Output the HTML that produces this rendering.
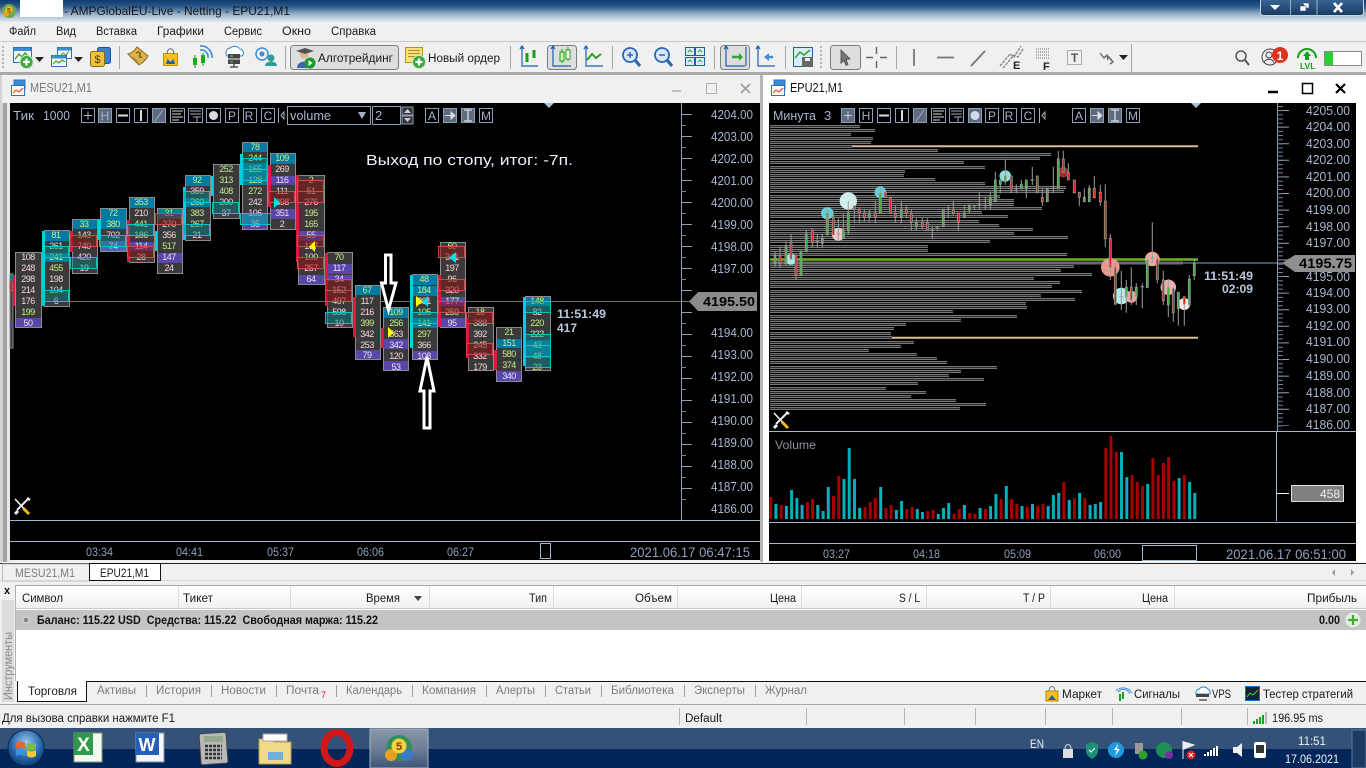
<!DOCTYPE html>
<html lang="ru"><head><meta charset="utf-8"><title>MT5</title>
<style>
html,body{margin:0;padding:0;background:#f0f0f0;overflow:hidden}
svg{display:block;font-family:"Liberation Sans",sans-serif}
.ui{font-size:11.5px;fill:#1a1a1a}
.gr{font-size:11.5px;fill:#7c7c7c}
.ax{font-size:13px;fill:#a7b6cc}
.tm{font-size:12px;fill:#8f9fb8}
.dt{font-size:13.5px;fill:#8ea0bd}
.bt{font-size:12px;fill:#a3b2c8;text-anchor:middle}
.k{fill:#3a3a3a;stroke:#8c8c8c}
.bl{fill:#007ba3}.pu{fill:#5a45a8}
.t{fill:rgba(0,140,140,.42);stroke:#00c4cf}
.r{fill:rgba(140,20,20,.52);stroke:#cc4c4c}
.rb{fill:#e01840}.cb{fill:#00cfe0}
.c text{font-size:9px;letter-spacing:-.5px;text-anchor:middle}
.p{fill:#f7d8d8}.g{fill:#c6f088}.w{fill:#e8e4f8}
.o{fill:none;stroke:#8f9fb5}
.f{fill:#5d6b82;stroke:#8f9fb5}
</style></head><body>
<svg width="1366" height="768" viewBox="0 0 1366 768" xmlns="http://www.w3.org/2000/svg">
<defs>
<linearGradient id="tb" x1="0" y1="0" x2="0" y2="1"><stop offset="0" stop-color="#0e3a6e"/><stop offset=".3" stop-color="#2c5a8c"/><stop offset=".62" stop-color="#93acc6"/><stop offset="1" stop-color="#e2e9f0"/></linearGradient>
<linearGradient id="hd" x1="0" y1="0" x2="0" y2="1"><stop offset="0" stop-color="#fff"/><stop offset="1" stop-color="#eef0f2"/></linearGradient>
<linearGradient id="btn" x1="0" y1="0" x2="0" y2="1"><stop offset="0" stop-color="#3d6a9a"/><stop offset="1" stop-color="#16395f"/></linearGradient>
<linearGradient id="tk" x1="0" y1="0" x2="0" y2="1"><stop offset="0" stop-color="#8a97a8"/><stop offset=".5" stop-color="#6d7f96"/><stop offset="1" stop-color="#3c5577"/></linearGradient>
<radialGradient id="orb" cx=".5" cy=".35" r=".7"><stop offset="0" stop-color="#9cc8ee"/><stop offset=".6" stop-color="#2566a8"/><stop offset="1" stop-color="#0c3467"/></radialGradient>
<g id="pl"><circle r="6.5" fill="#3aa83a" stroke="#c8e8c8"/><path d="M-3.5 0H3.5M0-3.5V3.5" stroke="#fff" stroke-width="2.2"/></g>
<g id="ci"><rect x="3" y="0" width="11" height="9" fill="#3c8ad8" stroke="#2a72c0"/><rect x=".5" y="5.5" width="13" height="10" fill="#fff" stroke="#2a72c0"/><path d="M2 13l3-3 3 2 4-4" fill="none" stroke="#e03020"/></g>
<g id="tools"><path d="M1 1L15 16" stroke="#eee" stroke-width="1.6"/><path d="M15 0L3 12" stroke="#eee" stroke-width="2"/><path d="M13 0l3 2" stroke="#eee" stroke-width="2.5"/><path d="M9 10l6 6" stroke="#f2b820" stroke-width="3"/><path d="M1 16l3-3" stroke="#eee" stroke-width="3"/></g>
<path id="vp" fill="none" shape-rendering="crispEdges" d="M770 126.5H860M770 130.5H875M770 134.5H851M770 138.5H873M770 142.5H871M770 146.5H852M770 150.5H938M770 154.5H1051M770 158.5H1040M770 162.5H964M770 167.5H985M770 171.5H905M770 175.5H904M770 179.5H935M770 183.5H985M770 187.5H1066M770 191.5H1064M770 196.5H1000M770 200.5H1014M770 204.5H1014M770 208.5H1042M770 212.5H982M770 216.5H1008M770 221.5H979M770 225.5H999M770 229.5H1033M770 233.5H1014M770 237.5H1068M770 241.5H990M770 246.5H928M770 250.5H928M770 254.5H1067M770 266.5H1074M770 270.5H1061M770 274.5H1092M770 278.5H1034M770 282.5H1060M770 286.5H1052M770 291.5H1082M770 295.5H1041M770 299.5H1075M770 303.5H1026M770 307.5H1027M770 311.5H953M770 316.5H1017M770 320.5H961M770 324.5H906M770 328.5H894M770 333.5H891M770 337.5H892M770 342.5H914M770 346.5H901M770 350.5H869M770 354.5H917M770 358.5H937M770 362.5H947M770 367.5H997M770 371.5H961M770 375.5H949M770 379.5H984M770 383.5H918M770 388.5H886M770 392.5H926M770 396.5H911M770 400.5H956M770 404.5H986M770 408.5H960"/>
</defs>

<rect width="1366" height="768" fill="#f0f0f0"/>
<!-- title bar -->
<rect width="1366" height="22" fill="url(#tb)"/>
<circle cx="9" cy="11" r="7" fill="#6aa84f"/><circle cx="6" cy="14" r="3" fill="#e8a020"/><circle cx="9" cy="10" r="3.6" fill="#f0c020"/><text x="9" y="13" font-size="7" fill="#8a3a00" text-anchor="middle" font-weight="bold">5</text>
<rect x="20" y="0" width="43" height="17" fill="#fff"/>
<text x="64" y="15" font-size="12" fill="#141414" textLength="226" lengthAdjust="spacingAndGlyphs">- AMPGlobalEU-Live - Netting - EPU21,M1</text>
<rect x="1260.5" y="-2" width="103" height="17.5" rx="3" fill="url(#btn)" stroke="#c8d6e4"/>
<path d="M1290.5 0V15M1317 0V15" stroke="#c8d6e4" opacity=".7"/>
<path d="M1270 5h10l-5 5z" fill="#fff"/>
<path d="M1300 6h6v5h-6z M1303 3h6v5h-3" fill="#fff" stroke="#27486c" stroke-width=".6"/>
<path d="M1334 3l8 9M1342 3l-8 9" stroke="#fff" stroke-width="2.6"/>

<!-- menu -->
<text class="ui" x="9" y="35" textLength="27" lengthAdjust="spacingAndGlyphs">Файл</text>
<text class="ui" x="56" y="35" textLength="20" lengthAdjust="spacingAndGlyphs">Вид</text>
<text class="ui" x="96" y="35" textLength="41" lengthAdjust="spacingAndGlyphs">Вставка</text>
<text class="ui" x="157" y="35" textLength="47" lengthAdjust="spacingAndGlyphs">Графики</text>
<text class="ui" x="224" y="35" textLength="38" lengthAdjust="spacingAndGlyphs">Сервис</text>
<text class="ui" x="282" y="35" textLength="29" lengthAdjust="spacingAndGlyphs">Окно</text>
<text class="ui" x="331" y="35" textLength="45" lengthAdjust="spacingAndGlyphs">Справка</text>
<path d="M0 41.5H1366" stroke="#c9c9c9"/>

<!-- toolbar -->
<path d="M3 46V70M821 46V70" stroke="#b4b4b4" stroke-width="2" stroke-dasharray="2 2"/>
<path d="M119.5 46V69M285.5 46V69M510.5 46V69M612.5 46V69M714.5 46V69M785.5 46V69M896.5 46V69M1131.5 44V72" stroke="#a8a8a8"/>
<!-- new chart -->
<rect x="13.5" y="47.5" width="18" height="15" fill="#f4f8fc" stroke="#2a72c0"/><rect x="14" y="48" width="17" height="3" fill="#3c8ad8"/><path d="M15 59l4-5 3 3 3-4 4 4" fill="none" stroke="#3aa028" stroke-width="1.4"/><use href="#pl" x="26.5" y="62"/>
<path d="M35 57h9l-4.5 5z" fill="#222"/>
<!-- profiles -->
<rect x="57.5" y="47.5" width="14" height="11" fill="#f4f8fc" stroke="#2a72c0"/><path d="M58 49h13" stroke="#3c8ad8" stroke-width="3"/><path d="M60 56l3-3 3 2 3-4" fill="none" stroke="#3aa028"/>
<rect x="51.5" y="55.5" width="15" height="11" fill="#f4f8fc" stroke="#2a72c0"/><path d="M52 57h14" stroke="#3c8ad8" stroke-width="3"/><path d="M53 64l3-3 3 2 3-3 3 2" fill="none" stroke="#3aa028" stroke-width="1.2"/>
<path d="M74 57h9l-4.5 5z" fill="#222"/>
<!-- market watch -->
<rect x="97.5" y="47.5" width="13" height="16" rx="2" fill="#3f7fd0" stroke="#234f8c"/><rect x="90.5" y="51.5" width="14" height="15" rx="2" fill="#f0c040" stroke="#8a6a10"/><text x="97.5" y="63" font-size="11" fill="#5a4208" text-anchor="middle">$</text>
<!-- book -->
<path d="M128 54c4-1 7-4 9-7l11 9c-2 4-6 7-9 9z" fill="#dcb44c" stroke="#8a6a20"/><path d="M130 57c4 0 7 3 9 8" fill="none" stroke="#a88426"/><path d="M136 53c3-2 5 0 4 2s0 3 2 2" fill="none" stroke="#8a5a10" stroke-width="1.5"/>
<!-- bag -->
<rect x="163.5" y="53.5" width="14" height="12" fill="#f4c020" stroke="#c09010"/><path d="M167 54c0-7 7-7 7 0" fill="none" stroke="#666"/><path d="M166 64l1.5-5 3 3 3-3 1.5 5z" fill="#2060b0"/>
<!-- signals -->
<path d="M195 55V68M203 53V66" stroke="#0a9a0a"/><rect x="193" y="58" width="4" height="7" fill="#10b010"/><rect x="201" y="55" width="4" height="8" fill="#10b010"/><path d="M200 50a7 7 0 0 1 8 8M200 46a11 11 0 0 1 12 12" fill="none" stroke="#3b8ed8" stroke-width="1.6"/>
<!-- vps -->
<path d="M227 56a5 5 0 0 1 3-8 7 7 0 0 1 10 1 4 4 0 0 1 2 7z" fill="#fff" stroke="#2a8ad0"/><rect x="228" y="54" width="12" height="4.5" fill="#444"/><rect x="228" y="59.5" width="12" height="4.5" fill="#444"/><path d="M230 56h3M230 62h3" stroke="#6c6"/><path d="M234 64v3M230 67h8" stroke="#555" stroke-width="1.5"/>
<!-- social -->
<circle cx="262" cy="54" r="6" fill="none" stroke="#3b8ed8" stroke-width="1.5"/><circle cx="262" cy="54" r="2.5" fill="#3b8ed8"/><circle cx="271" cy="58" r="3.5" fill="#2f9d98"/><path d="M265 66c0-6 12-6 12 0z" fill="#2f9d98"/>

<rect x="290.5" y="45.5" width="108" height="24" rx="3" fill="#dedede" stroke="#7e7e7e"/>
<circle cx="304" cy="54" r="4.5" fill="#e0b890"/><path d="M296 51l9-3 9 3-9 3z" fill="#555"/><path d="M297 68c0-8 13-8 14-3v3z" fill="#3a66b0"/><circle cx="310" cy="63" r="5.5" fill="#1a9a30"/><path d="M308.5 60l4 3-4 3z" fill="#fff"/>
<text class="ui" x="318" y="62" textLength="75" lengthAdjust="spacingAndGlyphs">Алготрейдинг</text>
<rect x="405.5" y="47.5" width="17" height="15" fill="#f6e080" stroke="#b89020"/><path d="M408 50.5H420M408 53.5H420M408 56.5H420" stroke="#b08a20"/><use href="#pl" x="419" y="62"/>
<text class="ui" x="428" y="62" textLength="72" lengthAdjust="spacingAndGlyphs">Новый ордер</text>

<!-- chart type buttons -->
<rect x="547.5" y="45.5" width="29" height="24" rx="3" fill="#dedede" stroke="#7e7e7e"/>
<rect x="720.5" y="45.5" width="29" height="24" rx="3" fill="#dedede" stroke="#7e7e7e"/>
<g fill="none" stroke="#1c5fb0" stroke-width="1.2">
<path d="M522 47V66H538M520 49l2-3 2 3"/>
<path d="M553 47V66H571M551 49l2-3 2 3"/>
<path d="M586 47V66H603M584 49l2-3 2 3"/>
<path d="M726 47V66H745M724 49l2-3 2 3M746 47V66"/>
<path d="M758 47V66H775M756 49l2-3 2 3"/>
</g>
<path d="M527 53V62M534 50V58" stroke="#18a018" stroke-width="3"/>
<path d="M562 49V63M568 47V61" stroke="#18a018"/><rect x="560" y="52" width="4" height="9" fill="#d8f0b0" stroke="#18a018"/><rect x="566" y="50" width="4" height="9" fill="#fff" stroke="#18a018"/>
<path d="M587 60l5-6 4 4 5-4" fill="none" stroke="#18a018" stroke-width="1.8"/>
<circle cx="630" cy="55" r="7" fill="#d8e8f8" stroke="#2a66b0" stroke-width="1.8"/><path d="M627 55h6M630 52v6" stroke="#2a66b0" stroke-width="1.5"/><path d="M635 60l5 6" stroke="#2a66b0" stroke-width="3"/>
<circle cx="662" cy="55" r="7" fill="#d8e8f8" stroke="#2a66b0" stroke-width="1.8"/><path d="M659 55h6" stroke="#2a66b0" stroke-width="1.5"/><path d="M667 60l5 6" stroke="#2a66b0" stroke-width="3"/>
<g fill="#d8ecf8" stroke="#1c5fb0"><rect x="685.5" y="47.5" width="9" height="8"/><rect x="695.5" y="47.5" width="9" height="8"/><rect x="685.5" y="57.5" width="9" height="8"/><rect x="695.5" y="57.5" width="9" height="8"/></g>
<path d="M688 52l2-2 2 2M698 52l2-2 2 2M688 62l2-2 2 2M698 62l2-2 2 2" stroke="#2fa82f" fill="none"/>
<path d="M732 57h8" stroke="#2fa82f" stroke-width="2.5"/><path d="M739 53l4 4-4 4z" fill="#2fa82f"/>
<path d="M773 57h-5" stroke="#3b8ed8" stroke-width="2.5"/><path d="M769 53l-5 4 5 4z" fill="#3b8ed8"/>
<rect x="793.5" y="47.5" width="19" height="19" fill="#d8ecf8" stroke="#1c5fb0"/><rect x="802" y="57" width="11" height="10" fill="#666"/><rect x="805" y="58" width="5" height="3" fill="#eee"/><path d="M795 58l5-6 4 3 6-5" fill="none" stroke="#2fa82f" stroke-width="1.5"/>

<rect x="830.5" y="45.5" width="30" height="24" rx="3" fill="#dedede" stroke="#7e7e7e"/>
<path d="M841 50l9 9-4 .5 2 5-2 .8-2-5-3 3z" fill="#777" stroke="#444" stroke-width=".8"/>
<path d="M876.5 47V54M876.5 61V68M866 57.5H873M880 57.5H887" stroke="#666" stroke-width="1.5"/>
<path d="M914 49V66M937 57.5H954M971 66L985 51" stroke="#777" stroke-width="1.8"/>
<path d="M1000 66l10-12 4 3 7-11M1003 68l11-13 4 2 5-8" stroke="#888" stroke-width="1.4" fill="none" stroke-dasharray="3 1"/>
<text x="1013" y="69" font-size="11" font-weight="bold" fill="#222">E</text>
<path d="M1036 49H1050M1036 52H1050M1036 55H1050M1036 58H1050" stroke="#666" stroke-dasharray="1 1"/>
<text x="1043" y="70" font-size="11" font-weight="bold" fill="#222">F</text>
<rect x="1067.5" y="50.5" width="14" height="14" fill="none" stroke="#666" stroke-dasharray="1 1"/>
<text x="1074.5" y="62" font-size="12" font-weight="bold" fill="#555" text-anchor="middle">T</text>
<path d="M1100 53l4 5 3-3 1 5M1108 56l5 6-3 2" fill="none" stroke="#666" stroke-width="1.4"/>
<path d="M1119 55h9l-4.5 5z" fill="#222"/>
<circle cx="1241" cy="56" r="5" fill="none" stroke="#555" stroke-width="1.5"/><path d="M1245 60l4 5" stroke="#555" stroke-width="2"/>
<circle cx="1270" cy="57" r="8" fill="#eee" stroke="#444"/><circle cx="1269" cy="55" r="3" fill="none" stroke="#444"/><path d="M1264 63c1-5 9-5 10 0" fill="none" stroke="#444"/><circle cx="1280" cy="55" r="8" fill="#e03020"/><text x="1280" y="60" font-size="12" font-weight="bold" fill="#fff" text-anchor="middle">1</text>
<path d="M1298 58a9 9 0 0 1 18 0" fill="none" stroke="#18a018" stroke-width="2"/><path d="M1307 51l4 5h-2v4h-4v-4h-2z" fill="#18a018"/><text x="1300" y="69" font-size="8.5" font-weight="bold" fill="#18a018">LVL</text>
<rect x="1324.5" y="51.5" width="37" height="14" fill="#fff" stroke="#888"/><rect x="1325" y="52" width="8" height="13" fill="#2fce2f"/>
<rect x="0" y="72" width="1366" height="3" fill="#a9a9a9"/>

<!-- windows -->
<rect x="0" y="75" width="3" height="487" fill="#d4d4d4"/><rect x="3" y="75" width="4" height="487" fill="#a4a4a4"/><rect x="7" y="75" width="3" height="487" fill="#e8e8e8"/>
<rect x="2" y="75" width="760" height="28" fill="#f0f0f0"/>
<rect x="760" y="75" width="3" height="487" fill="#b6b6b6"/>
<rect x="763" y="75" width="603" height="487" fill="#fff"/>
<use href="#ci" x="11" y="80"/><use href="#ci" x="771" y="80"/>
<text x="30" y="92" font-size="12.5" fill="#7a7a7a" textLength="62" lengthAdjust="spacingAndGlyphs">MESU21,M1</text>
<text x="790" y="92" font-size="12.5" fill="#111" textLength="53" lengthAdjust="spacingAndGlyphs">EPU21,M1</text>
<path d="M672 91H681" stroke="#b0b0b0" stroke-width="1.5"/><rect x="706.5" y="83.5" width="10" height="10" fill="none" stroke="#b0b0b0"/><path d="M741 84l9 9M750 84l-9 9" stroke="#a0a0a0" stroke-width="1.8"/>
<path d="M1268 92H1278" stroke="#000" stroke-width="2.5"/><rect x="1302.5" y="83.5" width="10" height="10" fill="none" stroke="#000" stroke-width="1.5"/><path d="M1336 84l9 9M1345 84l-9 9" stroke="#000" stroke-width="2.2"/>
<rect x="10" y="103" width="750" height="457" fill="#000"/>
<rect x="769" y="103" width="587" height="458" fill="#000"/>

<!-- LEFT chart -->
<path d="M70 301.5H690" stroke="#707070"/>
<text class="ax" x="13" y="120" textLength="21" lengthAdjust="spacingAndGlyphs" fill="#96a3b5">Тик</text>
<text class="ax" x="43" y="120" textLength="27" lengthAdjust="spacingAndGlyphs" fill="#96a3b5">1000</text>
<g>
<rect class="o" x="81.5" y="108.5" width="13" height="14"/><path d="M84 115.5H92M88 111.5V119.5" stroke="#a3b2c8"/>
<rect class="f" x="98.5" y="108.5" width="13" height="14"/><text class="bt" x="105" y="120">H</text>
<rect class="o" x="116.5" y="108.5" width="13" height="14"/><path d="M118 115.5H128" stroke="#ddd" stroke-width="2"/>
<rect class="o" x="134.5" y="108.5" width="13" height="14"/><path d="M141 110V121" stroke="#ddd" stroke-width="2"/>
<rect class="f" x="152.5" y="108.5" width="13" height="14"/><path d="M155 121L163 110" stroke="#aab"/>
<rect class="o" x="170.5" y="108.5" width="14" height="14"/><path d="M172 111H183M172 114H181M172 117H183M172 120H179" stroke="#ddd"/>
<rect class="o" x="188.5" y="108.5" width="14" height="14"/><path d="M190 111H201M190 114H201M193 117H201M197 117V122" stroke="#aab"/>
<rect class="o" x="206.5" y="108.5" width="14" height="14"/><circle cx="213.5" cy="115.5" r="4.5" fill="#d5dbe6"/>
<rect class="o" x="225.5" y="108.5" width="13" height="14"/><text class="bt" x="232" y="120">P</text>
<rect class="o" x="243.5" y="108.5" width="13" height="14"/><text class="bt" x="249" y="120">R</text>
<rect class="o" x="261.5" y="108.5" width="13" height="14"/><text class="bt" x="268" y="120">C</text>
<path d="M278.5 108V123M284 112l-3 3.5 3 3.5z" stroke="#a3b2c8" fill="none"/>
<rect class="o" x="287.5" y="106.5" width="83" height="18"/><text class="ax" x="290" y="120" textLength="41" lengthAdjust="spacingAndGlyphs">volume</text><path d="M358 112h8l-4 7z" fill="#a3b2c8"/>
<rect class="o" x="372.5" y="106.5" width="28" height="18"/><text class="ax" x="375" y="120">2</text>
<rect x="402" y="107" width="11" height="8" fill="#333" stroke="#8f9fb5"/><rect x="402" y="116" width="11" height="8" fill="#333" stroke="#8f9fb5"/><path d="M404 113l3.5-4 3.5 4zM404 118l3.5 4 3.5-4z" fill="#ccd"/>
<rect class="o" x="425.5" y="108.5" width="13" height="14"/><text class="bt" x="432" y="120">A</text>
<rect class="f" x="443.5" y="108.5" width="13" height="14"/><path d="M445 115.5H453M451 112l4 3.5-4 3.5z" fill="#ddd" stroke="#ddd"/>
<rect class="f" x="461.5" y="108.5" width="13" height="14"/><path d="M464 110H472M464 121H472M468 110V121" stroke="#ddd" stroke-width="1.3"/>
<rect class="o" x="479.5" y="108.5" width="13" height="14"/><text class="bt" x="486" y="120">M</text>
<path d="M544 103H554L549 108z" fill="#a9bfd8"/>
</g>
<text x="366" y="165" font-size="15" fill="#eef" textLength="207" lengthAdjust="spacingAndGlyphs">Выход по стопу, итог: -7п.</text>

<!-- footprint -->
<g class="c">
<rect class="k" x="10" y="274" width="3" height="74"/><rect class="bl" x="10" y="275" width="3" height="9"/><rect class="pu" x="10" y="322" width="3" height="6"/><rect class="r" x="10" y="279.5" width="2" height="11"/>
<!-- 1 --><rect class="rb" x="13" y="275" width="3" height="31"/><rect class="k" x="15.5" y="252.5" width="26" height="75"/><rect class="pu" x="16" y="318" width="25" height="9"/>
<text class="p" x="28" y="260">108</text><text class="p" x="28" y="271">248</text><text class="p" x="28" y="282">298</text><text class="p" x="28" y="293">214</text><text class="p" x="28" y="304">176</text><text class="g" x="28" y="315">199</text><text class="w" x="28" y="326">50</text>
<!-- 2 --><rect class="k" x="44.5" y="230.5" width="25" height="76"/><rect class="bl" x="45" y="231" width="24" height="10"/><rect class="bl" x="45" y="253" width="24" height="9"/><rect class="cb" x="42" y="231" width="3" height="75"/>
<text class="g" x="56" y="238">81</text><text class="g" x="56" y="249">261</text><text class="g" x="56" y="260">241</text><text class="g" x="56" y="271">455</text><text class="p" x="56" y="282">198</text><text class="g" x="56" y="293">104</text><text class="p" x="56" y="304">6</text>
<rect class="t" x="44.5" y="246.5" width="24" height="11"/><rect class="t" x="44.5" y="290.5" width="24" height="11"/>
<!-- 3 --><rect class="k" x="72.5" y="219.5" width="25" height="54"/><rect class="bl" x="73" y="220" width="24" height="9"/><rect class="rb" x="70" y="231" width="3" height="21"/>
<text class="g" x="84" y="227">33</text><text class="p" x="84" y="238">143</text><text class="p" x="84" y="249">740</text><text class="p" x="84" y="260">420</text><text class="p" x="84" y="271">19</text>
<rect class="r" x="70.5" y="235.5" width="26" height="11"/><rect class="t" x="70.5" y="257.5" width="26" height="11"/>
<!-- 4 --><rect class="k" x="100.5" y="208.5" width="26" height="43"/><rect class="bl" x="101" y="209" width="25" height="10"/><rect class="bl" x="101" y="219" width="25" height="10"/><rect x="101" y="241" width="25" height="10" fill="#4868b8"/><rect class="cb" x="98" y="219" width="3" height="21"/>
<text class="g" x="113" y="216">72</text><text class="g" x="113" y="227">380</text><text class="p" x="113" y="238">702</text><text class="p" x="113" y="249">74</text>
<rect class="t" x="99.5" y="235.5" width="26" height="11"/>
<!-- 5 --><rect class="k" x="129.5" y="197.5" width="25" height="65"/><rect class="bl" x="130" y="198" width="24" height="10"/><rect class="pu" x="130" y="242" width="24" height="9"/><rect class="rb" x="127" y="220" width="3" height="42"/><rect class="cb" x="155" y="231" width="2" height="20"/>
<text class="g" x="141" y="205">353</text><text class="p" x="141" y="216">210</text><text class="g" x="141" y="227">441</text><text class="g" x="141" y="238">186</text><text class="p" x="141" y="249">114</text><text class="p" x="141" y="260">28</text>
<rect class="t" x="127.5" y="224.5" width="26" height="11"/><rect class="r" x="127.5" y="246.5" width="26" height="11"/>
<!-- 6 --><rect class="k" x="157.5" y="208.5" width="25" height="65"/><rect class="bl" x="158" y="209" width="24" height="10"/><rect class="pu" x="158" y="253" width="24" height="10"/>
<text class="g" x="169" y="216">31</text><text class="p" x="169" y="227">270</text><text class="p" x="169" y="238">356</text><text class="g" x="169" y="249">517</text><text class="w" x="169" y="260">147</text><text class="p" x="169" y="271">24</text>
<rect class="r" x="155.5" y="213.5" width="26" height="11"/>
<!-- 7 --><rect class="k" x="185.5" y="175.5" width="25" height="65"/><rect class="bl" x="186" y="176" width="24" height="10"/><rect class="bl" x="186" y="198" width="24" height="9"/><rect class="cb" x="183" y="187" width="3" height="53"/><rect class="cb" x="211" y="176" width="2" height="20"/>
<text class="g" x="197" y="183">92</text><text class="p" x="197" y="194">359</text><text class="g" x="197" y="205">260</text><text class="g" x="197" y="216">383</text><text class="g" x="197" y="227">267</text><text class="p" x="197" y="238">21</text>
<rect class="t" x="183.5" y="191.5" width="26" height="11"/><rect class="t" x="183.5" y="224.5" width="26" height="11"/>
<!-- 8 --><rect class="k" x="213.5" y="164.5" width="26" height="54"/>
<text class="g" x="226" y="172">252</text><text class="g" x="226" y="183">313</text><text class="g" x="226" y="194">408</text><text class="p" x="226" y="205">200</text><text class="p" x="226" y="216">37</text>
<rect class="t" x="212.5" y="202.5" width="26" height="11"/>
<!-- 9 --><rect class="k" x="242.5" y="142.5" width="25" height="87"/><rect class="bl" x="243" y="143" width="24" height="9"/><rect class="bl" x="243" y="163" width="24" height="22"/><rect x="243" y="213" width="24" height="11" fill="#3c78b8"/><rect class="pu" x="243" y="224" width="24" height="5"/><rect class="cb" x="240" y="154" width="3" height="31"/>
<text class="g" x="255" y="150">78</text><text class="g" x="255" y="161">244</text><text class="g" x="255" y="172">155</text><text class="g" x="255" y="183">128</text><text class="g" x="255" y="194">272</text><text class="p" x="255" y="205">242</text><text class="p" x="255" y="216">106</text><text class="p" x="255" y="227">35</text>
<rect class="t" x="243" y="158.5" width="24" height="11"/><rect class="t" x="243" y="169.5" width="24" height="11"/><rect class="t" x="240.5" y="213.5" width="54" height="11"/>
<!-- 10 --><rect class="k" x="270.5" y="153.5" width="25" height="76"/><rect class="bl" x="271" y="154" width="24" height="10"/><rect class="pu" x="271" y="176" width="24" height="9"/><rect class="pu" x="271" y="209" width="24" height="10"/><rect class="rb" x="268" y="165" width="3" height="42"/>
<text class="g" x="282" y="161">109</text><text class="p" x="282" y="172">269</text><text class="w" x="282" y="183">116</text><text class="p" x="282" y="194">111</text><text class="p" x="282" y="205">398</text><text class="p" x="282" y="216">351</text><text class="p" x="282" y="227">2</text>
<rect class="r" x="268.5" y="191.5" width="26" height="11"/><path d="M274 197l6 5.5-6 5.5z" fill="#00e0e8"/>
<!-- 11 --><rect class="k" x="298.5" y="175.5" width="26" height="109"/><rect class="pu" x="299" y="231" width="25" height="10"/><rect class="pu" x="299" y="275" width="25" height="9"/><rect class="rb" x="296" y="175" width="3" height="87"/>
<text class="g" x="311" y="183">2</text><text class="p" x="311" y="194">51</text><text class="p" x="311" y="205">276</text><text class="g" x="311" y="216">195</text><text class="g" x="311" y="227">165</text><text class="p" x="311" y="238">55</text><text class="p" x="311" y="249">137</text><text class="p" x="311" y="260">100</text><text class="p" x="311" y="271">257</text><text class="w" x="311" y="282">64</text>
<rect class="r" x="297.5" y="180.5" width="26" height="11"/><rect class="r" x="297.5" y="191.5" width="26" height="11"/><rect class="r" x="297.5" y="235.5" width="26" height="11"/><rect class="r" x="297.5" y="257.5" width="26" height="11"/><path d="M315 241l-6 5.5 6 5.5z" fill="#ffff00"/>
<!-- 12 --><rect class="k" x="327.5" y="252.5" width="25" height="75"/><rect class="pu" x="328" y="264" width="24" height="10"/><rect class="pu" x="328" y="275" width="24" height="6"/><rect class="rb" x="325" y="253" width="3" height="53"/>
<text class="g" x="339" y="260">70</text><text class="w" x="339" y="271">117</text><text class="p" x="339" y="282">34</text><text class="p" x="339" y="293">152</text><text class="p" x="339" y="304">497</text><text class="p" x="339" y="315">598</text><text class="p" x="339" y="326">10</text>
<rect class="r" x="325.5" y="279.5" width="26" height="11"/><rect class="r" x="325.5" y="290.5" width="26" height="11"/><rect class="t" x="325.5" y="312.5" width="26" height="11"/>
<!-- 13 --><rect class="k" x="355.5" y="285.5" width="25" height="74"/><rect class="bl" x="356" y="286" width="24" height="9"/><rect class="pu" x="356" y="350" width="24" height="9"/><rect class="rb" x="353" y="297" width="3" height="40"/>
<text class="g" x="367" y="293">67</text><text class="p" x="367" y="304">117</text><text class="p" x="367" y="315">216</text><text class="g" x="367" y="326">399</text><text class="p" x="367" y="337">342</text><text class="p" x="367" y="348">253</text><text class="w" x="367" y="358">79</text>
<!-- 14 --><rect class="k" x="383.5" y="307.5" width="25" height="63"/><rect class="bl" x="384" y="308" width="24" height="10"/><rect class="pu" x="384" y="339" width="24" height="10"/><rect class="pu" x="384" y="361" width="24" height="9"/><rect class="rb" x="381" y="328" width="3" height="20"/>
<text class="g" x="396" y="315">109</text><text class="g" x="396" y="326">256</text><text class="p" x="396" y="337">563</text><text class="w" x="396" y="348">342</text><text class="p" x="396" y="359">120</text><text class="w" x="396" y="370">53</text>
<path d="M388 327l6 5.5-6 5.5z" fill="#ffff00"/>
<!-- 15 --><rect class="k" x="412.5" y="274.5" width="25" height="85"/><rect class="bl" x="413" y="275" width="24" height="10"/><rect class="bl" x="413" y="286" width="24" height="10"/><rect class="bl" x="413" y="318" width="24" height="10"/><rect class="pu" x="413" y="351" width="24" height="8"/><rect class="cb" x="410" y="275" width="3" height="73"/>
<text class="g" x="424" y="282">48</text><text class="g" x="424" y="293">184</text><text class="p" x="424" y="304">381</text><text class="g" x="424" y="315">105</text><text class="g" x="424" y="326">141</text><text class="g" x="424" y="337">297</text><text class="p" x="424" y="348">366</text><text class="w" x="424" y="359">108</text>
<rect class="t" x="411.5" y="312.5" width="26" height="11"/><path d="M416 296l7 5.5-7 5.5z" fill="#ffff00"/><path d="M428 296l-6 5.5 6 5.5z" fill="#00e0e8"/>
<!-- 16 --><rect class="k" x="440.5" y="242.5" width="25" height="85"/><rect class="pu" x="441" y="297" width="24" height="9"/><rect class="pu" x="441" y="318" width="24" height="9"/><rect class="rb" x="438" y="275" width="3" height="52"/>
<text class="g" x="452" y="249">60</text><text class="p" x="452" y="260">341</text><text class="p" x="452" y="271">197</text><text class="p" x="452" y="282">96</text><text class="p" x="452" y="293">320</text><text class="p" x="452" y="304">177</text><text class="p" x="452" y="315">259</text><text class="w" x="452" y="326">95</text>
<rect class="r" x="438.5" y="246.5" width="26" height="11"/><rect class="r" x="438.5" y="279.5" width="26" height="11"/><rect class="r" x="438.5" y="301.5" width="26" height="11"/><path d="M456 252l-7 5.5 7 5.5z" fill="#00e0e8"/>
<!-- 17 --><rect class="k" x="468.5" y="307.5" width="25" height="63"/><rect class="rb" x="466" y="318" width="3" height="40"/>
<text class="g" x="480" y="315">18</text><text class="p" x="480" y="326">388</text><text class="p" x="480" y="337">392</text><text class="p" x="480" y="348">245</text><text class="p" x="480" y="359">332</text><text class="p" x="480" y="370">179</text>
<rect class="r" x="466.5" y="312.5" width="26" height="11"/><rect class="r" x="466.5" y="343.5" width="26" height="11"/>
<!-- 18 --><rect class="k" x="496.5" y="327.5" width="25" height="54"/><rect class="bl" x="497" y="339" width="24" height="9"/><rect class="pu" x="497" y="371" width="24" height="10"/><rect class="rb" x="494" y="350" width="3" height="20"/>
<text class="g" x="509" y="335">21</text><text class="g" x="509" y="346">151</text><text class="g" x="509" y="357">580</text><text class="g" x="509" y="368">374</text><text class="w" x="509" y="379">340</text>
<!-- 19 --><rect class="k" x="525.5" y="296.5" width="25" height="74"/><rect class="bl" x="526" y="297" width="24" height="9"/><rect class="bl" x="526" y="340" width="24" height="18"/><rect class="cb" x="523" y="297" width="3" height="69"/>
<text class="g" x="537" y="304">148</text><text class="p" x="537" y="315">82</text><text class="g" x="537" y="326">220</text><text class="p" x="537" y="337">222</text><text class="g" x="537" y="348">43</text><text class="g" x="537" y="359">48</text><text class="g" x="537" y="370">23</text>
<rect class="t" x="525.5" y="301.5" width="25" height="11"/><rect class="t" x="525.5" y="334.5" width="25" height="11"/><rect class="t" x="525.5" y="345.5" width="25" height="11"/><rect class="t" x="525.5" y="356.5" width="25" height="11"/>
</g>
<text x="557" y="318" font-size="12" font-weight="bold" fill="#b9c8de" textLength="49" lengthAdjust="spacingAndGlyphs">11:51:49</text>
<text x="557" y="332" font-size="12" font-weight="bold" fill="#b9c8de">417</text>
<path d="M385.5 255H391V283H396L388.5 310 381.5 283H385.5Z" fill="#000" stroke="#fff" stroke-width="3"/>
<path d="M427 357L434 391H430V428H424V391H420Z" fill="#000" stroke="#fff" stroke-width="3"/>
<use href="#tools" x="14" y="498"/>

<!-- left axis -->
<path d="M681.5 103V521" stroke="#8fa3bf"/>
<path d="M686.5 114V510" stroke="#8fa3bf" stroke-width="11" stroke-dasharray="1 21"/>
<path d="M683.5 125V510" stroke="#6f8098" stroke-width="5" stroke-dasharray="1 21"/>
<g>
<text class="ax" x="711" y="119" textLength="42" lengthAdjust="spacingAndGlyphs">4204.00</text>
<text class="ax" x="711" y="141" textLength="42" lengthAdjust="spacingAndGlyphs">4203.00</text>
<text class="ax" x="711" y="163" textLength="42" lengthAdjust="spacingAndGlyphs">4202.00</text>
<text class="ax" x="711" y="185" textLength="42" lengthAdjust="spacingAndGlyphs">4201.00</text>
<text class="ax" x="711" y="207" textLength="42" lengthAdjust="spacingAndGlyphs">4200.00</text>
<text class="ax" x="711" y="229" textLength="42" lengthAdjust="spacingAndGlyphs">4199.00</text>
<text class="ax" x="711" y="251" textLength="42" lengthAdjust="spacingAndGlyphs">4198.00</text>
<text class="ax" x="711" y="273" textLength="42" lengthAdjust="spacingAndGlyphs">4197.00</text>
<text class="ax" x="711" y="337" textLength="42" lengthAdjust="spacingAndGlyphs">4194.00</text>
<text class="ax" x="711" y="359" textLength="42" lengthAdjust="spacingAndGlyphs">4193.00</text>
<text class="ax" x="711" y="381" textLength="42" lengthAdjust="spacingAndGlyphs">4192.00</text>
<text class="ax" x="711" y="403" textLength="42" lengthAdjust="spacingAndGlyphs">4191.00</text>
<text class="ax" x="711" y="425" textLength="42" lengthAdjust="spacingAndGlyphs">4190.00</text>
<text class="ax" x="711" y="447" textLength="42" lengthAdjust="spacingAndGlyphs">4189.00</text>
<text class="ax" x="711" y="469" textLength="42" lengthAdjust="spacingAndGlyphs">4188.00</text>
<text class="ax" x="711" y="491" textLength="42" lengthAdjust="spacingAndGlyphs">4187.00</text>
<text class="ax" x="711" y="513" textLength="42" lengthAdjust="spacingAndGlyphs">4186.00</text>
</g>
<path d="M689 301.5L698 292H757V311H698Z" fill="#8b8b8b"/>
<text x="703" y="306" font-size="13" font-weight="bold" fill="#000" textLength="52" lengthAdjust="spacingAndGlyphs">4195.50</text>
<path d="M10 520.5H760M10 541.5H760" stroke="#a6b8d0"/>
<text class="tm" x="86" y="556" textLength="27" lengthAdjust="spacingAndGlyphs">03:34</text>
<text class="tm" x="176" y="556" textLength="27" lengthAdjust="spacingAndGlyphs">04:41</text>
<text class="tm" x="267" y="556" textLength="27" lengthAdjust="spacingAndGlyphs">05:37</text>
<text class="tm" x="357" y="556" textLength="27" lengthAdjust="spacingAndGlyphs">06:06</text>
<text class="tm" x="447" y="556" textLength="27" lengthAdjust="spacingAndGlyphs">06:27</text>
<rect x="540.5" y="543.5" width="10" height="15" fill="none" stroke="#a6b8d0"/>
<text class="dt" x="630" y="557" textLength="120" lengthAdjust="spacingAndGlyphs">2021.06.17 06:47:15</text>

<!-- RIGHT chart -->
<text class="ax" x="773" y="120" textLength="43" lengthAdjust="spacingAndGlyphs">Минута</text>
<text class="ax" x="824" y="120">3</text>
<g>
<rect class="f" x="841.5" y="108.5" width="13" height="14"/><path d="M844 115.5H852M848 111.5V119.5" stroke="#ccd"/>
<rect class="o" x="859.5" y="108.5" width="13" height="14"/><text class="bt" x="866" y="120">H</text>
<rect class="o" x="877.5" y="108.5" width="13" height="14"/><path d="M879 115.5H889" stroke="#ddd" stroke-width="2"/>
<rect class="o" x="895.5" y="108.5" width="13" height="14"/><path d="M902 110V121" stroke="#ddd" stroke-width="2"/>
<rect class="f" x="913.5" y="108.5" width="13" height="14"/><path d="M916 121L924 110" stroke="#aab"/>
<rect class="o" x="931.5" y="108.5" width="14" height="14"/><path d="M933 111H944M933 114H942M933 117H944M933 120H940" stroke="#ddd"/>
<rect class="o" x="949.5" y="108.5" width="14" height="14"/><path d="M951 111H962M951 114H962M954 117H962M958 117V122" stroke="#aab"/>
<rect class="f" x="968.5" y="108.5" width="13" height="14"/><circle cx="975" cy="115.5" r="4.5" fill="#d5dbe6"/>
<rect class="o" x="985.5" y="108.5" width="13" height="14"/><text class="bt" x="992" y="120">P</text>
<rect class="o" x="1003.5" y="108.5" width="13" height="14"/><text class="bt" x="1009" y="120">R</text>
<rect class="o" x="1021.5" y="108.5" width="13" height="14"/><text class="bt" x="1028" y="120">C</text>
<path d="M1039.5 108V123M1045 112l-3 3.5 3 3.5z" stroke="#a3b2c8" fill="none"/>
<rect class="o" x="1072.5" y="108.5" width="13" height="14"/><text class="bt" x="1079" y="120">A</text>
<rect class="f" x="1090.5" y="108.5" width="13" height="14"/><path d="M1092 115.5H1100M1098 112l4 3.5-4 3.5z" fill="#ddd" stroke="#ddd"/>
<rect class="f" x="1108.5" y="108.5" width="13" height="14"/><path d="M1111 110H1119M1111 121H1119M1115 110V121" stroke="#ddd" stroke-width="1.3"/>
<rect class="o" x="1126.5" y="108.5" width="13" height="14"/><text class="bt" x="1133" y="120">M</text>
<path d="M1191 103H1201L1196 108z" fill="#a9bfd8"/>
</g>
<!-- volume profile -->
<use href="#vp" stroke="#767676" stroke-width="3"/>
<use href="#vp" stroke="#2a2a2a" stroke-width="1"/>
<path d="M770 263H1183" stroke="#6c6c6c" stroke-width="3"/>
<path d="M852 146.3H1198M892 337.7H1198" stroke="#d9bd94" stroke-width="2"/>
<path d="M770 259.5H1198" stroke="#6db31e" stroke-width="2.5"/>
<path d="M1183 263H1290" stroke="#8fa0b5"/>
<!-- bubbles -->
<circle cx="791" cy="259.3" r="5.5" fill="#a8e8e8"/><circle cx="827.3" cy="213.3" r="5.7" fill="#70c8d0" stroke="#50e0e8"/><circle cx="848.3" cy="201" r="8.7" fill="#d0eeee"/><circle cx="838.3" cy="234.3" r="6.5" fill="#f5c8c8"/><circle cx="880.3" cy="192.3" r="5.3" fill="#70c8d0" stroke="#50e0e8"/><circle cx="1005.3" cy="176" r="5.3" fill="#a0dcdc" stroke="#70e0e8"/><circle cx="1063.3" cy="172.3" r="5.3" fill="#a03030"/>
<circle cx="1110.3" cy="267.3" r="9.3" fill="#e89a8e"/><circle cx="1152.3" cy="259" r="7.3" fill="#eea8a0"/><circle cx="1121.3" cy="296" r="8.3" fill="#b5eaea"/><circle cx="1131.3" cy="296.7" r="6" fill="#e8a8a8"/><circle cx="1168.3" cy="287.3" r="7.7" fill="#eeb0b0"/><circle cx="1184.3" cy="304" r="6" fill="#ffe8e8"/>
<!-- wicks -->
<path stroke="#9c9c9c" fill="none" d="M775 251V266.7M780 246.7V268.3M786 241.7V265M791 234V260M796 255V280M801 251V275.7M806.3 230V251.7M812.3 230V247.3M817.3 234V248.3M815.3 242H819.3M822.3 234V248.3M827.3 210V235M833.3 213.3V235M838.3 217.3V240M836.3 234H840.3M843.3 213.3V238.3M848.3 201V235M854.3 205V223.3M859.3 208.3V223.3M864.3 209.3V221.7M869.3 209.3V221.7M875.3 200.7V223.3M880.3 188.3V213.3M885.3 191.7V198.3M890.3 196.7V213.3M895.3 205V222.7M901.3 200.7V222.7M906.3 205V218.3M911.3 209.3V231M916.3 218.3V231M922.3 217.3V229M927.3 218.3V231M932.3 226.7V238.7M930.3 230H934.3M937.3 226V231M935.3 227H939.3M943.3 209.3V226.7M948.3 205V218.3M946.3 209.5H950.3M953.3 200.7V215M958.3 213.3V231M964.3 205V218.3M969.3 205V213.3M974.3 205V210M972.3 205.7H976.3M979.3 191.7V210M977.3 205H981.3M985.3 196.7V210M983.3 205.7H987.3M990.3 191.7V210M995.3 171.7V201.7M1000.3 180V193.3M1005.3 159V185M1011.3 176V193.3M1016.3 184.3V193.3M1014.3 189H1018.3M1021.3 180V189M1026.3 180V198.3M1032.3 166.7V185M1030.3 180H1034.3M1037.3 176V193.3M1042.3 188.3V206M1047.3 188.3V201.7M1053.3 166.7V193.3M1051.3 188.3H1055.3M1058.3 150.7V189M1063.3 150.7V172.3M1068.3 163.3V180M1074.3 180V193.3M1079.3 191.7V206M1084.3 188.3V201.7M1089.3 185V201.7M1094.3 176V198.3M1100.3 185V206M1105.3 184.3V247.3M1110.3 234V280M1115.3 263.3V305M1121.3 270.7V310M1119.3 296.7H1123.3M1126.3 280V312.7M1131.3 267.3V305M1136.3 283.3V305M1142.3 283.3V308.3M1140.3 286.7H1144.3M1147.3 260V288.3M1152.3 222.3V263.3M1150.3 258.3H1154.3M1157.3 255V283.3M1163.3 270.7V305M1168.3 279V317.3M1173.3 287.3V321.7M1178.3 292.3V325.7M1184.3 296.7V325.7M1189.3 275V306.7M1194.3 259.3V280"/>
<!-- green bodies -->
<path fill="#36b436" stroke="#999" stroke-width=".8" d="M774 255h2V263.3h-2zM785 246.7h2V263.3h-2zM800 251h2V275.7h-2zM805.3 234h2V251.7h-2zM821.3 238.3h2V243.3h-2zM826.3 213.3h2V235h-2zM842.3 230h2V238.3h-2zM847.3 213h2V231h-2zM868.3 213.3h2V217.3h-2zM879.3 193.3h2V213.3h-2zM900.3 209.3h2V217.3h-2zM915.3 222.3h2V226.7h-2zM942.3 209.3h2V226.7h-2zM963.3 213.3h2V217.3h-2zM968.3 205h2V210h-2zM989.3 197.7h2V205.7h-2zM994.3 180h2V201.7h-2zM999.3 180h2V184.3h-2zM1004.3 176h2V180.7h-2zM1020.3 184.3h2V189h-2zM1025.3 180h2V189h-2zM1046.3 188.3h2V201.7h-2zM1057.3 159h2V189h-2zM1083.3 197.3h2V201.7h-2zM1088.3 188.3h2V201.7h-2zM1125.3 287.3h2V296.7h-2zM1135.3 287.3h2V296.7h-2zM1146.3 260h2V287.3h-2zM1167.3 287.3h2V305h-2zM1177.3 292.3h2V308.3h-2zM1188.3 279h2V305h-2zM1193.3 263.3h2V275.7h-2z"/>
<!-- red bodies -->
<path fill="#e01414" stroke="#999" stroke-width=".8" d="M779 255h2V263.3h-2zM790 242.3h2V259h-2zM795 255h2V275.7h-2zM811.3 230h2V242.7h-2zM832.3 217.3h2V235h-2zM853.3 206h2V209.3h-2zM858.3 209.3h2V213.3h-2zM863.3 213.3h2V217.3h-2zM874.3 213.3h2V217.3h-2zM884.3 192.3h2V197.3h-2zM889.3 197.3h2V213.3h-2zM894.3 213.3h2V217.3h-2zM905.3 209.3h2V213.3h-2zM910.3 213.3h2V222.3h-2zM921.3 222.3h2V226.7h-2zM926.3 222.3h2V230.7h-2zM952.3 209.3h2V213.3h-2zM957.3 213.3h2V222.3h-2zM1010.3 176h2V189h-2zM1036.3 176h2V192.7h-2zM1041.3 197.3h2V201.7h-2zM1062.3 159h2V172.3h-2zM1067.3 172.3h2V180h-2zM1073.3 180h2V192.7h-2zM1078.3 192.3h2V197.3h-2zM1093.3 188.3h2V197.7h-2zM1099.3 192.3h2V201.7h-2zM1104.3 201h2V238.7h-2zM1109.3 238.3h2V267.3h-2zM1114.3 267.3h2V304h-2zM1130.3 287.3h2V300h-2zM1156.3 259h2V279.3h-2zM1162.3 280h2V300.7h-2zM1172.3 288.3h2V312.7h-2zM1183.3 296.7h2V304h-2z"/>
<text x="1204" y="280" font-size="12" font-weight="bold" fill="#b9c8de" textLength="49" lengthAdjust="spacingAndGlyphs">11:51:49</text>
<text x="1222" y="293" font-size="12" font-weight="bold" fill="#b9c8de" textLength="31" lengthAdjust="spacingAndGlyphs">02:09</text>
<use href="#tools" x="773" y="412"/>
<!-- right axis -->
<path d="M1277.5 103V432" stroke="#8fa3bf"/>
<path d="M1283 110V426" stroke="#8fa3bf" stroke-width="12" stroke-dasharray="1 15.6"/>
<path d="M1280 106V430" stroke="#6f8098" stroke-width="6" stroke-dasharray="1 3.15"/>
<g>
<text class="ax" x="1306" y="115" textLength="44" lengthAdjust="spacingAndGlyphs">4205.00</text>
<text class="ax" x="1306" y="131" textLength="44" lengthAdjust="spacingAndGlyphs">4204.00</text>
<text class="ax" x="1306" y="148" textLength="44" lengthAdjust="spacingAndGlyphs">4203.00</text>
<text class="ax" x="1306" y="164" textLength="44" lengthAdjust="spacingAndGlyphs">4202.00</text>
<text class="ax" x="1306" y="181" textLength="44" lengthAdjust="spacingAndGlyphs">4201.00</text>
<text class="ax" x="1306" y="197" textLength="44" lengthAdjust="spacingAndGlyphs">4200.00</text>
<text class="ax" x="1306" y="214" textLength="44" lengthAdjust="spacingAndGlyphs">4199.00</text>
<text class="ax" x="1306" y="231" textLength="44" lengthAdjust="spacingAndGlyphs">4198.00</text>
<text class="ax" x="1306" y="247" textLength="44" lengthAdjust="spacingAndGlyphs">4197.00</text>
<text class="ax" x="1306" y="281" textLength="44" lengthAdjust="spacingAndGlyphs">4195.00</text>
<text class="ax" x="1306" y="297" textLength="44" lengthAdjust="spacingAndGlyphs">4194.00</text>
<text class="ax" x="1306" y="313" textLength="44" lengthAdjust="spacingAndGlyphs">4193.00</text>
<text class="ax" x="1306" y="330" textLength="44" lengthAdjust="spacingAndGlyphs">4192.00</text>
<text class="ax" x="1306" y="346" textLength="44" lengthAdjust="spacingAndGlyphs">4191.00</text>
<text class="ax" x="1306" y="363" textLength="44" lengthAdjust="spacingAndGlyphs">4190.00</text>
<text class="ax" x="1306" y="380" textLength="44" lengthAdjust="spacingAndGlyphs">4189.00</text>
<text class="ax" x="1306" y="397" textLength="44" lengthAdjust="spacingAndGlyphs">4188.00</text>
<text class="ax" x="1306" y="413" textLength="44" lengthAdjust="spacingAndGlyphs">4187.00</text>
<text class="ax" x="1306" y="429" textLength="44" lengthAdjust="spacingAndGlyphs">4186.00</text>
</g>
<path d="M1282 263L1295 255H1355V272H1295Z" fill="#8f8f8f"/>
<text x="1299" y="268" font-size="13.5" font-weight="bold" fill="#000" textLength="53" lengthAdjust="spacingAndGlyphs">4195.75</text>
<path d="M769 431.5H1356M769 522.5H1356M769 543.5H1356" stroke="#a6b8d0"/>
<path d="M1276.5 432V521" stroke="#a6b8d0"/>
<text x="775" y="449" font-size="12" fill="#8d939c" textLength="41" lengthAdjust="spacingAndGlyphs">Volume</text>
<!-- volume -->
<path stroke="#a60000" stroke-width="3" fill="none" d="M770.7 497V519M781.2 505V519M807.4 502V519M812.6 499V519M833.5 496V519M838.8 476V519M865 507V519M870.2 502V519M875.4 498V519M885.9 508V519M891.1 505V519M906.8 509V519M912.1 507V519M927.8 511V519M933 510V519M954 514V519M959.2 509V519M969.7 513V519M974.9 514V519M985.4 509V519M1001.1 499V519M1011.6 499V519M1016.8 504V519M1027.3 507V519M1037.7 506V519M1043 504V519M1063.9 482V519M1074.4 498V519M1084.9 498V519M1105.8 448V519M1111 436V519M1116.3 452V519M1132 475V519M1137.2 482V519M1142.5 486V519M1152.9 458V519M1158.2 475V519M1163.4 463V519M1168.6 457V519M1173.9 481V519M1184.3 475V519"/>
<path stroke="#00b0b8" stroke-width="3" fill="none" d="M775.9 504V519M786.4 506V519M791.6 490V519M796.9 498V519M802.1 505V519M817.8 505V519M823.1 511V519M828.3 487V519M844 479V519M849.2 448V519M854.5 479V519M859.7 508V519M880.7 487V519M896.4 510V519M901.6 501V519M917.3 509V519M922.5 512V519M938.3 514V519M943.5 508V519M948.7 503V519M964.4 505V519M980.1 508V519M990.6 506V519M995.9 494V519M1006.3 486V519M1022 506V519M1032.5 504V519M1048.2 506V519M1053.4 495V519M1058.7 493V519M1069.2 500V519M1079.6 493V519M1090.1 505V519M1095.3 504V519M1100.6 502V519M1121.5 452V519M1126.8 477V519M1147.7 484V519M1179.1 478V519M1189.6 482V519M1194.8 493V519"/>
<path d="M1277 493.5H1289" stroke="#eee"/>
<rect x="1291.5" y="485.5" width="52" height="16" fill="#808080" stroke="#ddd"/>
<text x="1340" y="498" font-size="12" fill="#eee" text-anchor="end">458</text>
<text class="tm" x="823" y="558" textLength="27" lengthAdjust="spacingAndGlyphs">03:27</text>
<text class="tm" x="913" y="558" textLength="27" lengthAdjust="spacingAndGlyphs">04:18</text>
<text class="tm" x="1004" y="558" textLength="27" lengthAdjust="spacingAndGlyphs">05:09</text>
<text class="tm" x="1094" y="558" textLength="27" lengthAdjust="spacingAndGlyphs">06:00</text>
<rect x="1142.5" y="545.5" width="54" height="15" fill="none" stroke="#a6b8d0"/>
<text class="dt" x="1226" y="559" textLength="120" lengthAdjust="spacingAndGlyphs">2021.06.17 06:51:00</text>

<!-- doc tabs -->
<rect x="0" y="562" width="1366" height="24" fill="#f0f0f0"/>
<path d="M0 563.5H1366" stroke="#222"/>
<path d="M0 580.5H1366" stroke="#d8d8d8"/>
<rect x="2.5" y="564" width="87" height="17" fill="#f0f0f0" stroke="#bbb"/>
<rect x="89.5" y="563.5" width="71" height="17" fill="#fff" stroke="#111"/>
<text class="gr" x="15" y="577" textLength="60" lengthAdjust="spacingAndGlyphs">MESU21,M1</text>
<text class="ui" x="100" y="577" textLength="49" lengthAdjust="spacingAndGlyphs">EPU21,M1</text>
<path d="M1335 569v7l-3-3.5zM1351 569v7l3-3.5z" fill="#999"/>

<!-- terminal -->
<rect x="0" y="585" width="1366" height="120" fill="#f0f0f0"/>
<rect x="15" y="585" width="1351" height="96" fill="#fff"/>
<path d="M15 585.5H1366" stroke="#a8a8a8"/><path d="M15.5 585V681" stroke="#b0b0b0"/>
<rect x="16" y="586" width="1350" height="23" fill="url(#hd)"/>
<path d="M178.5 586V608M290.5 586V608M429.5 586V608M553.5 586V608M677.5 586V608M801.5 586V608M926.5 586V608M1050.5 586V608M1174.5 586V608" stroke="#dcdcdc"/>
<path d="M16 608.5H1366" stroke="#c9c9c9"/>
<text class="ui" x="22" y="602" textLength="41" lengthAdjust="spacingAndGlyphs">Символ</text>
<text class="ui" x="183" y="602" textLength="30" lengthAdjust="spacingAndGlyphs">Тикет</text>
<text class="ui" x="366" y="602" textLength="34" lengthAdjust="spacingAndGlyphs">Время</text>
<path d="M414 596h8l-4 5z" fill="#444"/>
<text class="ui" x="529" y="602" textLength="18" lengthAdjust="spacingAndGlyphs">Тип</text>
<text class="ui" x="635" y="602" textLength="37" lengthAdjust="spacingAndGlyphs">Объем</text>
<text class="ui" x="770" y="602" textLength="26" lengthAdjust="spacingAndGlyphs">Цена</text>
<text class="ui" x="899" y="602" textLength="21" lengthAdjust="spacingAndGlyphs">S / L</text>
<text class="ui" x="1023" y="602" textLength="22" lengthAdjust="spacingAndGlyphs">T / P</text>
<text class="ui" x="1142" y="602" textLength="26" lengthAdjust="spacingAndGlyphs">Цена</text>
<text class="ui" x="1307" y="602" textLength="50" lengthAdjust="spacingAndGlyphs">Прибыль</text>
<rect x="16" y="610" width="1350" height="20" fill="#c4c4c4"/>
<circle cx="26" cy="620" r="3" fill="#8a8a8a" stroke="#ddd"/>
<text x="37" y="624" font-size="11.5" font-weight="bold" fill="#111" textLength="341" lengthAdjust="spacingAndGlyphs" xml:space="preserve">Баланс: 115.22 USD  Средства: 115.22  Свободная маржа: 115.22</text>
<text x="1319" y="624" font-size="11.5" font-weight="bold" fill="#111" textLength="21" lengthAdjust="spacingAndGlyphs">0.00</text>
<circle cx="1353" cy="620" r="7.5" fill="#e4ece4"/><path d="M1348 620H1358M1353 615V625" stroke="#43ad2b" stroke-width="2.2"/>
<path d="M17 681.5H1366" stroke="#111"/>
<!-- vertical tab -->
<rect x="2" y="600" width="12" height="102" fill="#dcdcdc"/>
<text x="7" y="594" font-size="11" font-weight="bold" fill="#111" text-anchor="middle">x</text>
<text x="0" y="0" transform="translate(12 700) rotate(-90)" font-size="11.5" fill="#8c8c8c" textLength="68" lengthAdjust="spacingAndGlyphs">Инструменты</text>
<!-- bottom tabs -->
<rect x="17.5" y="681.5" width="69" height="20" fill="#fff" stroke="#111"/><path d="M18 682H86" stroke="#fff" stroke-width="2"/>
<text class="ui" x="28" y="695" textLength="49" lengthAdjust="spacingAndGlyphs">Торговля</text>
<path d="M146.5 685V697M211.5 685V697M276.5 685V697M336.5 685V697M412.5 685V697M486.5 685V697M545.5 685V697M601.5 685V697M684.5 685V697M755.5 685V697" stroke="#a0a0a0"/>
<text class="gr" x="97" y="694" textLength="39" lengthAdjust="spacingAndGlyphs">Активы</text>
<text class="gr" x="156" y="694" textLength="45" lengthAdjust="spacingAndGlyphs">История</text>
<text class="gr" x="221" y="694" textLength="45" lengthAdjust="spacingAndGlyphs">Новости</text>
<text class="gr" x="286" y="694" textLength="33" lengthAdjust="spacingAndGlyphs">Почта</text>
<text x="321" y="698" font-size="9" fill="#e02020">7</text>
<text class="gr" x="346" y="694" textLength="56" lengthAdjust="spacingAndGlyphs">Календарь</text>
<text class="gr" x="422" y="694" textLength="54" lengthAdjust="spacingAndGlyphs">Компания</text>
<text class="gr" x="496" y="694" textLength="39" lengthAdjust="spacingAndGlyphs">Алерты</text>
<text class="gr" x="555" y="694" textLength="36" lengthAdjust="spacingAndGlyphs">Статьи</text>
<text class="gr" x="611" y="694" textLength="63" lengthAdjust="spacingAndGlyphs">Библиотека</text>
<text class="gr" x="694" y="694" textLength="51" lengthAdjust="spacingAndGlyphs">Эксперты</text>
<text class="gr" x="765" y="694" textLength="42" lengthAdjust="spacingAndGlyphs">Журнал</text>
<rect x="1046" y="691" width="12" height="10" fill="#f4c020" stroke="#b88a10"/><path d="M1049 691c0-6 6-6 6 0" fill="none" stroke="#777"/><path d="M1048 700l4-5 4 5z" fill="#2060b0"/>
<text class="ui" x="1062" y="698" textLength="40" lengthAdjust="spacingAndGlyphs">Маркет</text>
<path d="M1120 694v7M1123 692v7" stroke="#18a018" stroke-width="2"/><path d="M1118 692a7 7 0 0 1 12 2M1116 691a10 10 0 0 1 16 2" fill="none" stroke="#3b8ed8"/>
<text class="ui" x="1134" y="698" textLength="46" lengthAdjust="spacingAndGlyphs">Сигналы</text>
<path d="M1196 694a4 4 0 0 1 3-5 6 6 0 0 1 9 0 4 4 0 0 1 2 5z" fill="#fff" stroke="#2a8ad0"/><rect x="1196" y="694" width="13" height="3" fill="#444"/><path d="M1199 700h8" stroke="#555" stroke-width="1.5"/>
<text class="ui" x="1212" y="698" textLength="19" lengthAdjust="spacingAndGlyphs">VPS</text>
<rect x="1245.5" y="686.5" width="14" height="14" fill="#123" stroke="#1c6fd0"/><path d="M1247 697l3-4 3 2 5-5" fill="none" stroke="#3fd03f"/>
<text class="ui" x="1263" y="698" textLength="90" lengthAdjust="spacingAndGlyphs">Тестер стратегий</text>
<path d="M0 704.5H1366" stroke="#a8a8a8"/>
<!-- status -->
<text class="ui" x="2" y="722" textLength="173" lengthAdjust="spacingAndGlyphs">Для вызова справки нажмите F1</text>
<text class="ui" x="685" y="722" textLength="37" lengthAdjust="spacingAndGlyphs">Default</text>
<path d="M679.5 708V725M806.5 708V725M904.5 708V725M975.5 708V725M1045.5 708V725M1112.5 708V725M1181.5 708V725M1247.5 708V725" stroke="#b4b4b4"/>
<path d="M1254 724v-3M1257 724v-5M1260 724v-7M1263 724v-9" stroke="#18a018" stroke-width="2"/><path d="M1266 724v-12" stroke="#bbb" stroke-width="2"/>
<text class="ui" x="1272" y="722" textLength="51" lengthAdjust="spacingAndGlyphs">196.95 ms</text>

<!-- taskbar -->
<rect x="0" y="728" width="1366" height="40" fill="#02265a"/>
<rect x="0" y="728" width="1366" height="21" fill="#345178"/>
<rect x="1352" y="730" width="14" height="38" fill="#1c3b62" stroke="#5c7a9e"/>
<circle cx="26" cy="748" r="18" fill="url(#orb)" stroke="#0a2a55"/>
<path d="M16 743c3-2 6-2 9 0v6c-3-2-6-2-9 0z" fill="#e8642a"/><path d="M27 743c3 2 6 2 9 0v6c-3 2-6 2-9 0z" fill="#7cc03c"/><path d="M16 750c3-2 6-2 9 0v6c-3-2-6-2-9 0z" fill="#3b93e0"/><path d="M27 750c3 2 6 2 9 0v6c-3 2-6 2-9 0z" fill="#f4c82c"/>
<rect x="74" y="733" width="28" height="29" fill="#f4f8f2" stroke="#7aa070"/><rect x="74" y="733" width="19" height="22" fill="#2f9a4c"/><text x="83.5" y="751" font-size="19" font-weight="bold" fill="#fff" text-anchor="middle">X</text>
<rect x="136" y="733" width="28" height="29" fill="#f4f6fa" stroke="#7a90b0"/><rect x="136" y="733" width="23" height="22" fill="#2460b8"/><text x="147" y="751" font-size="18" font-weight="bold" fill="#fff" text-anchor="middle">W</text>
<rect x="200" y="733" width="27" height="31" rx="2" fill="#b8b8b8" stroke="#444" transform="rotate(-4 213 748)"/><rect x="204" y="736" width="19" height="6" fill="#98a890"/><path d="M205 746h17M205 750h17M205 754h17M205 758h17" stroke="#333" stroke-width="2.5" stroke-dasharray="3 1"/>
<path d="M259 739h12l3 3h17v22h-32z" fill="#f2d98a" stroke="#b89a50"/><rect x="263" y="734" width="24" height="7" fill="#fff" stroke="#aaa"/><path d="M268 760v-8h15v8z" fill="#6fb0dc"/>
<ellipse cx="337" cy="748" rx="13" ry="15.5" fill="none" stroke="#d01818" stroke-width="7"/>
<rect x="370" y="729" width="58" height="39" fill="url(#tk)" stroke="#a8b4c2"/>
<circle cx="399" cy="748" r="13" fill="#2f8f5a"/><circle cx="391" cy="755" r="6" fill="#e8a020"/><circle cx="407" cy="755" r="6" fill="#3b78c8"/><circle cx="399" cy="746" r="7.5" fill="#f2d040"/><text x="399" y="750" font-size="11" font-weight="bold" fill="#8a3a00" text-anchor="middle">5</text>
<text x="1030" y="748" font-size="11.5" fill="#e8eef6" textLength="14" lengthAdjust="spacingAndGlyphs">EN</text>
<rect x="1063" y="749" width="10" height="9" fill="#ddd"/><path d="M1065 749c0-6 6-6 6 0" fill="none" stroke="#ddd"/>
<path d="M1092 742l6 2v7c0 4-3 6-6 8-3-2-6-4-6-8v-7z" fill="#1f8f78"/><path d="M1089 750l2 2 4-4" stroke="#fff" fill="none"/>
<circle cx="1116" cy="750" r="8" fill="#1e9ae0"/><path d="M1118 744l-4 6h3l-2 6 5-7h-3z" fill="#fff"/>
<rect x="1135" y="743" width="8" height="11" fill="#999"/><circle cx="1143" cy="755" r="4.5" fill="#2ea02e"/>
<circle cx="1164" cy="750" r="8" fill="#1f8f58"/><circle cx="1169" cy="755" r="4" fill="#7a2ea0"/>
<path d="M1183 741v18M1184 742l10 3-10 4z" stroke="#eee" fill="#eee"/><circle cx="1191" cy="755" r="4.5" fill="#e02020"/><path d="M1189 753l4 4M1193 753l-4 4" stroke="#fff"/>
<path d="M1205 756v-2M1208 756v-4M1211 756v-6M1214 756v-8M1217 756v-10" stroke="#fff" stroke-width="2"/>
<path d="M1233 747h4l5-4v14l-5-4h-4z" fill="#eee"/>
<rect x="1254" y="742" width="12" height="16" rx="2" fill="#fff"/><rect x="1256" y="745" width="8" height="8" fill="#333"/>
<text x="1312" y="745" font-size="11.5" fill="#eef2f8" text-anchor="middle">11:51</text>
<text x="1312" y="763" font-size="11.5" fill="#eef2f8" text-anchor="middle" textLength="54" lengthAdjust="spacingAndGlyphs">17.06.2021</text>
</svg>
</body></html>
